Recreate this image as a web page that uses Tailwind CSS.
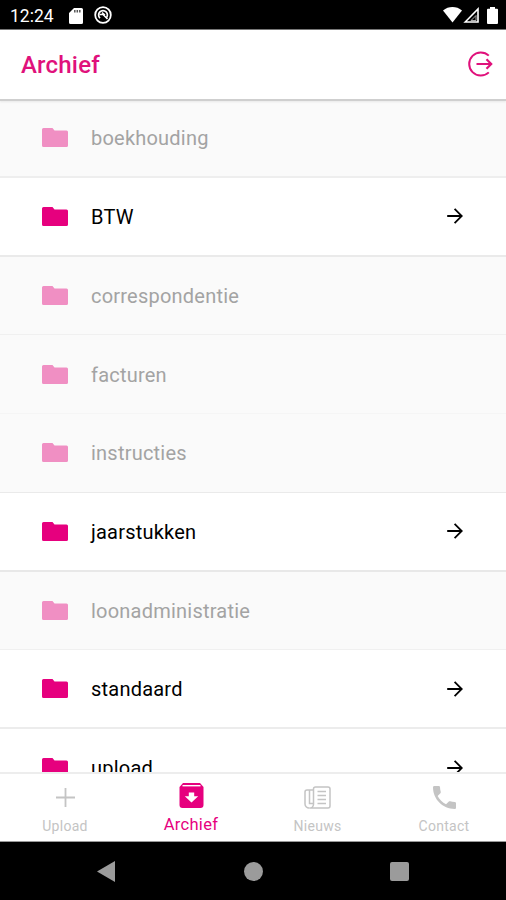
<!DOCTYPE html>
<html lang="nl">
<head>
  <meta charset="UTF-8">
  <meta name="viewport" content="width=device-width, initial-scale=1.0">
  <title>Archief</title>
  <script src="https://cdn.jsdelivr.net/npm/@tailwindcss/browser@4"></script>
</head>
<body class="bg-white font-[Roboto,sans-serif]">

  <!-- Iconen -->
  <svg class="hidden">
    <symbol id="folder" viewBox="0 0 26 19">
      <path d="M1.500 0h9l2 2.500H24.500a1.500 1.500 0 0 1 1.500 1.500v13.500a1.500 1.500 0 0 1-1.500 1.500h-23A1.500 1.500 0 0 1 0 17.500v-16A1.500 1.500 0 0 1 1.500 0z" fill="currentColor"/>
    </symbol>
    <symbol id="arrow" viewBox="0 0 16 16">
      <path d="M.2 8h14.600M7.600 .800L14.800 8l-7.200 7.200" fill="none" stroke="currentColor" stroke-width="1.800"/>
    </symbol>
  </svg>

  <div class="flex flex-col h-[900px] w-[506px] overflow-hidden">

    <!-- Statusbalk -->
    <div class="flex h-[30px] shrink-0 items-center bg-black pl-[10px] pr-2 text-white border-b border-[#777]">
      <span class="w-[45px] text-[17.500px] leading-none pt-1">12:24</span>
      <svg class="ml-3.5 mt-0.5 h-4 w-3.5" viewBox="0 0 14 16"><path d="M5 0h7.500A1.500 1.500 0 0 1 14 1.500v13a1.500 1.500 0 0 1-1.500 1.500h-11A1.500 1.500 0 0 1 0 14.500V5z" fill="#fff"/><path d="M5.800 2v2.500M8.300 2v2.500M10.800 2v2.500" stroke="#555" stroke-width="1.500"/></svg>
      <svg class="ml-[11px] mt-px h-[18px] w-[18px]" viewBox="0 0 18 18" fill="none" stroke="#fff"><circle cx="9" cy="9" r="7.800" stroke-width="1.800"/><path d="M6 12.200A4.400 4.400 0 1 1 12 12.200" stroke-width="1.700"/><path d="M5.500 8.500h3.500l4.500 4.500M8 6.500l3 2.500" stroke-width="1.500"/></svg>
      <svg class="ml-auto mt-px h-4 w-[19px]" viewBox="0 0 19 16"><path d="M0 3.500C5.500-1.100 13.500-1.100 19 3.500L9.500 15.500z" fill="#fff"/></svg>
      <svg class="ml-px mt-px h-4 w-4" viewBox="0 0 16 16"><path d="M2.200 15L15 2v13z" fill="none" stroke="#fff" stroke-width="1.600"/><path d="M8 13.500l5-5v5z" fill="none" stroke="#aaa" stroke-width="1"/></svg>
      <svg class="ml-2 mt-px h-[17px] w-[11px]" viewBox="0 0 11 17"><path d="M3 0h5v1.800h2a1 1 0 0 1 1 1V16a1 1 0 0 1-1 1H1a1 1 0 0 1-1-1V2.800a1 1 0 0 1 1-1h2z" fill="#fff"/></svg>
    </div>

    <!-- Header -->
    <header class="relative z-10 flex h-[69px] shrink-0 items-center justify-between bg-white pl-[21px] pr-[13px] shadow-[0_2px_0_#cfcfcf,0_3px_2px_#e8e8e8]">
      <h1 class="text-[24px] font-medium tracking-[0.200px] text-[#e0117b]">Archief</h1>
      <svg class="mb-px h-[26px] w-[26px]" viewBox="0 0 26 26" fill="none" stroke="#e0117b" stroke-width="2">
        <path d="M21.800 4.600A11.600 11.600 0 1 0 21.800 21.400"/>
        <path d="M9.500 13h14.500M19.500 8.300L24.200 13l-4.700 4.700" stroke-width="2.200"/>
      </svg>
    </header>

    <!-- Mappen -->
    <ul class="h-[673px] shrink-0 overflow-hidden text-[20px] tracking-[0.220px]">
      <li class="flex h-[78.750px] items-center border-b-2 border-[#eeeeee] bg-[#fafafa] pl-[42px] text-[#a3a3a3]">
        <svg class="h-[19px] w-[26px] text-[#f08fc3]"><use href="#folder"/></svg>
        <span class="ml-[23px] pt-px">boekhouding</span>
      </li>
      <li class="flex h-[78.750px] items-center border-b-2 border-[#eaeaea] bg-white pl-[42px] text-black">
        <svg class="h-[19px] w-[26px] text-[#e6007e]"><use href="#folder"/></svg>
        <span class="ml-[23px] pt-px">BTW</span>
        <svg class="ml-auto mr-[43px] h-4 w-4"><use href="#arrow"/></svg>
      </li>
      <li class="flex h-[78.750px] items-center border-b border-[#f0f0f0] bg-[#fafafa] pl-[42px] text-[#a3a3a3]">
        <svg class="h-[19px] w-[26px] text-[#f08fc3]"><use href="#folder"/></svg>
        <span class="ml-[23px] pt-px">correspondentie</span>
      </li>
      <li class="flex h-[78.750px] items-center border-b border-[#f5f5f5] bg-[#fafafa] pl-[42px] text-[#a3a3a3]">
        <svg class="h-[19px] w-[26px] text-[#f08fc3]"><use href="#folder"/></svg>
        <span class="ml-[23px] pt-px">facturen</span>
      </li>
      <li class="flex h-[78.750px] items-center border-b border-[#eaeaea] bg-[#fafafa] pl-[42px] text-[#a3a3a3]">
        <svg class="h-[19px] w-[26px] text-[#f08fc3]"><use href="#folder"/></svg>
        <span class="ml-[23px] pt-px">instructies</span>
      </li>
      <li class="flex h-[78.750px] items-center border-b-2 border-[#e8e8e8] bg-white pl-[42px] text-black">
        <svg class="h-[19px] w-[26px] text-[#e6007e]"><use href="#folder"/></svg>
        <span class="ml-[23px] pt-px">jaarstukken</span>
        <svg class="ml-auto mr-[43px] h-4 w-4"><use href="#arrow"/></svg>
      </li>
      <li class="flex h-[78.750px] items-center border-b border-[#f0f0f0] bg-[#fafafa] pl-[42px] text-[#a3a3a3]">
        <svg class="h-[19px] w-[26px] text-[#f08fc3]"><use href="#folder"/></svg>
        <span class="ml-[23px] pt-px">loonadministratie</span>
      </li>
      <li class="flex h-[78.750px] items-center border-b-2 border-[#ececec] bg-white pl-[42px] text-black">
        <svg class="h-[19px] w-[26px] text-[#e6007e]"><use href="#folder"/></svg>
        <span class="ml-[23px] pt-px">standaard</span>
        <svg class="ml-auto mr-[43px] h-4 w-4"><use href="#arrow"/></svg>
      </li>
      <li class="flex h-[77px] items-center bg-white pl-[42px] text-black">
        <svg class="h-[19px] w-[26px] text-[#e6007e]"><use href="#folder"/></svg>
        <span class="ml-[23px]">upload</span>
        <svg class="ml-auto mr-[43px] h-4 w-4"><use href="#arrow"/></svg>
      </li>
    </ul>

    <!-- Tabbladen -->
    <nav class="grid h-[70px] shrink-0 grid-cols-4 border-t-2 border-b border-t-[#ededed] border-b-[#999] bg-white pl-0.5 text-[14px] tracking-[0.300px] text-[#c4c4c4]">
      <a class="flex flex-col items-center">
        <svg class="mt-3.5 h-[19px] w-[19px]" viewBox="0 0 19 19"><path d="M9.500 0v19M0 9.500h19" stroke="currentColor" stroke-width="1.800"/></svg>
        <span class="mt-[9px] leading-5">Upload</span>
      </a>
      <a class="flex flex-col items-center text-[#e6007e]">
        <svg class="mt-[9px] h-[25px] w-[25px]" viewBox="0 0 25 25"><path d="M4 0h17l3.500 4v18a3 3 0 0 1-3 3h-18a3 3 0 0 1-3-3V4z" fill="currentColor"/><path d="M3.500 2.700h18" stroke="#fff" stroke-width="1.400"/><path d="M9.800 9.500h5.400v3.800h4L12.500 19.500 5.800 13.300h4z" fill="#fff"/></svg>
        <span class="mt-[7px] text-[16.500px] leading-5">Archief</span>
      </a>
      <a class="flex flex-col items-center pl-px">
        <svg class="mt-3 h-[23px] w-[27px]" viewBox="0 0 27 23" fill="none" stroke="currentColor" stroke-width="1.500"><path d="M9.500 18.500V3a2 2 0 0 1 2-2H24a2 2 0 0 1 2 2v17a2 2 0 0 1-2 2H5.500a4 4 0 0 0 4-3.500z"/><path d="M9.500 4H3a2 2 0 0 0-2 2v12a4 4 0 0 0 4.500 4"/><path d="M5.500 4v13.500h4"/><path d="M13.500 5.500h8.500M13.500 9.500h8.500M13.500 13.500h8.500M13.500 17.500h8.500" stroke-width="1.700"/></svg>
        <span class="mt-[7px] leading-5">Nieuws</span>
      </a>
      <a class="flex flex-col items-center pl-0.5">
        <svg class="mt-3 h-[23px] w-[23px]" viewBox="3 3 18 18"><path d="M6.620 10.790c1.440 2.830 3.760 5.140 6.590 6.590l2.200-2.200c.27-.27.670-.36 1.020-.24 1.120.37 2.330.57 3.570.57.550 0 1 .45 1 1V20c0 .550-.45 1-1 1-9.390 0-17-7.610-17-17 0-.55.450-1 1-1h3.500c.55 0 1 .45 1 1 0 1.250.2 2.450.57 3.570.110.350.030.740-.25 1.020l-2.200 2.200z" fill="currentColor"/></svg>
        <span class="mt-[7px] leading-5">Contact</span>
      </a>
    </nav>

    <!-- Android navigatie -->
    <div class="flex h-[58px] shrink-0 items-center justify-between bg-black px-[97px] text-[#9b9b9b]">
      <svg class="h-[21px] w-[18px]" viewBox="0 0 18 21"><path d="M18 0v21L0 10.500z" fill="currentColor"/></svg>
      <span class="ml-px h-[19px] w-[19px] rounded-full bg-[#9b9b9b]"></span>
      <span class="h-[19px] w-[19px] rounded-[2px] bg-[#9b9b9b]"></span>
    </div>
  </div>
</body>
</html>
